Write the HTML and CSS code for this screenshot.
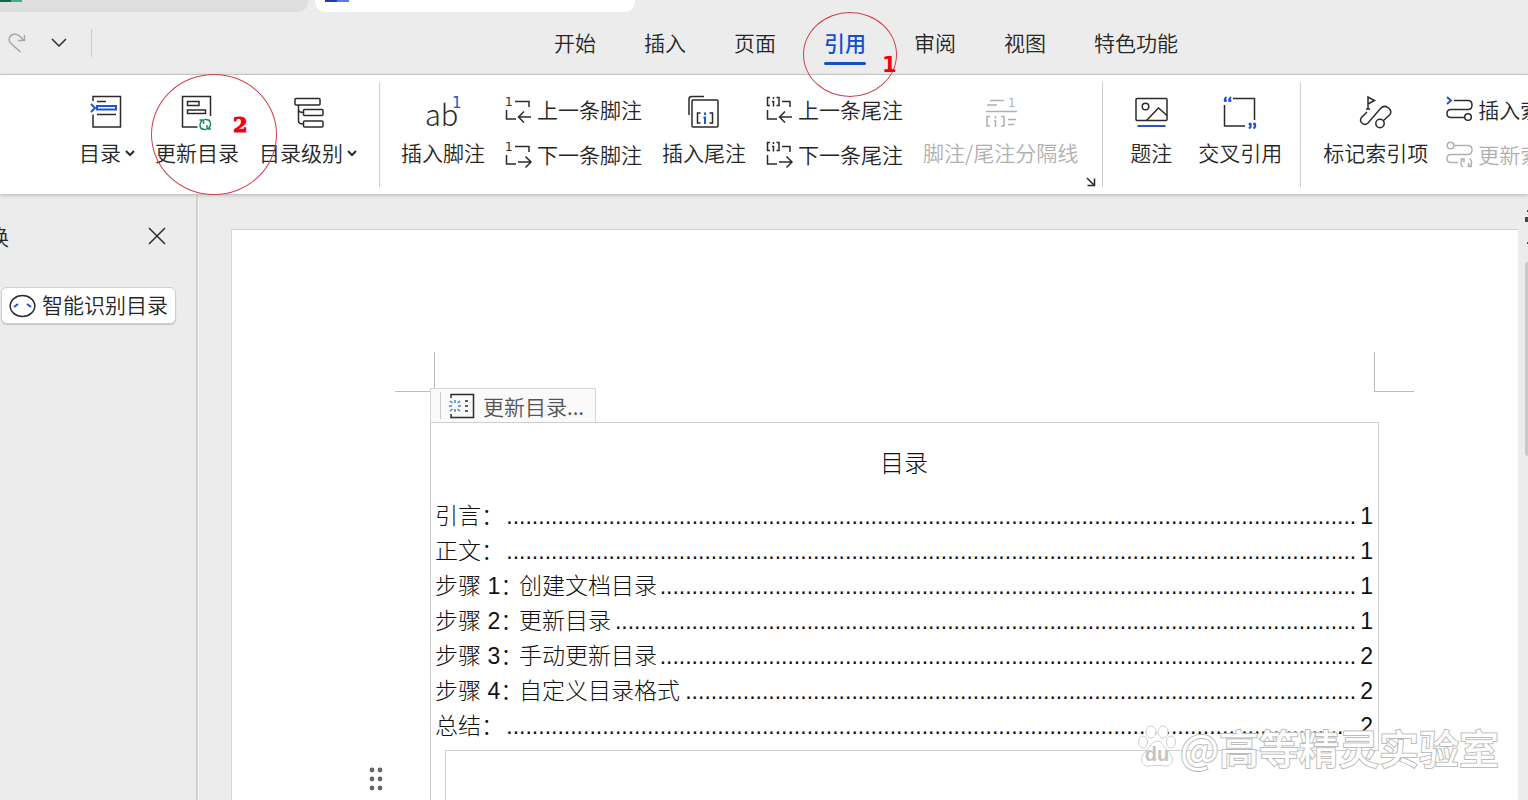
FILE: index.html
```
<!DOCTYPE html>
<html lang="zh-CN">
<head>
<meta charset="utf-8">
<title>目录</title>
<link rel="stylesheet" href="styles.css">
</head>
<body>
<div class="app">
  <div class="doc-tabs">
    <div class="doc-tab doc-tab-sheet"><span class="file-mark green"></span></div>
    <div class="doc-tab doc-tab-active"><span class="file-mark blue"></span></div>
  </div>

  <header class="menubar">
    <div class="quick">
      <button class="icon-btn" aria-label="恢复"><svg width="18" height="20" viewBox="0 0 18 20" class="line muted"><path d="M12.500 19L3 10.500C-1 6.500 2 .5 7.500 1.200C11.500 1.500 13 4 15.500 7M16.500 2v5.500H10"/></svg></button>
      <button class="icon-btn" aria-label="更多"><svg width="16" height="10" viewBox="0 0 16 10" class="line"><path d="M1 1l7 7 7-7"/></svg></button>
    </div>
    <nav class="tabs">
      <button class="tab">开始</button>
      <button class="tab">插入</button>
      <button class="tab">页面</button>
      <button class="tab active">引用<span class="ring ring-one"></span><span class="mark mark-one">1</span></button>
      <button class="tab">审阅</button>
      <button class="tab">视图</button>
      <button class="tab">特色功能</button>
    </nav>
  </header>

  <section class="ribbon">
    <div class="group group-toc">
      <button class="tool">
        <svg width="34" height="36" viewBox="0 0 34 36" class="line"><path d="M3 6V1.500h27.500V32H3V19.500M7 6.500h9M7 19.500h19"/><path class="b" d="M1 9l4 4-4 4M7 11h19v3.500H7z"/></svg>
        <span class="label">目录<svg width="10" height="7" viewBox="0 0 10 7" class="line caret"><path d="M1 1l4 4 4-4"/></svg></span>
      </button>
      <button class="tool">
        <svg width="34" height="36" viewBox="0 0 34 36" class="line"><path d="M17.500 32H2.500V1.500h28V21M7.500 6.500H19v4H7.500zM7.500 15h18v3.500h-18z"/><path class="g" d="M22 34.500C19 32 19.500 28 22 25.500M19.500 25h4v4M24.500 24.500c4-.5 6.500 2 6 5M28.500 24.500c3 2.500 2.500 6.500 0 9M31 34h-4v-4M26 34.500c-2 .3-3.500-.3-4.500-1.500"/></svg>
        <span class="label">更新目录</span><span class="ring ring-two"></span><span class="mark mark-two">2</span>
      </button>
      <button class="tool">
        <svg width="34" height="36" viewBox="0 0 34 36" class="line"><rect x="4" y="3.500" width="25" height="6.500" rx="1"/><rect x="12.500" y="14.500" width="19.500" height="6" rx="1"/><rect x="12.500" y="26" width="19.500" height="6" rx="1"/><path d="M7.500 10v16q0 3 5 3M7.500 14.500q0 3 5 3"/></svg>
        <span class="label">目录级别<svg width="10" height="7" viewBox="0 0 10 7" class="line caret"><path d="M1 1l4 4 4-4"/></svg></span>
      </button>
    </div>

    <div class="group group-notes">
      <button class="tool">
        <svg width="34" height="36" viewBox="0 0 34 36"><text class="ab" x="-1" y="31">ab</text><text class="sup" x="26" y="13">1</text></svg>
        <span class="label">插入脚注</span>
      </button>
      <div class="stack">
        <button class="row-tool"><svg width="27" height="28" viewBox="0 0 27 28" class="line"><path d="M10 6.500h14V12M1.500 15v9H11M26 22H14M19 16.500L13.500 22l5.500 5.500"/><text class="tiny" x="0" y="11">1</text></svg>上一条脚注</button>
        <button class="row-tool"><svg width="27" height="28" viewBox="0 0 27 28" class="line"><path d="M10 6.500h14V12M1.500 15v9H11M13 22h12M20.500 16.500L26 22l-5.500 5.500"/><text class="tiny" x="0" y="11">1</text></svg>下一条脚注</button>
      </div>
      <button class="tool">
        <svg width="34" height="36" viewBox="0 0 34 36" class="line"><path d="M2 20V4q0-2.500 2.500-2.500H17"/><rect x="5" y="5" width="26" height="27" rx="1"/><path d="M13.500 18h-3v10h3M22.500 18h3v10h-3"/><path class="b" d="M18 17.500v2.500M16.500 22.500H18V29"/></svg>
        <span class="label">插入尾注</span>
      </button>
      <div class="stack">
        <button class="row-tool"><svg width="27" height="28" viewBox="0 0 27 28" class="line"><path d="M16 6.500h8V12M1.500 15v9H11M26 22H14M19 16.500L13.500 22l5.500 5.500M4 2.500H1.500v8H4M10.500 2.500H13v8h-2.500M7.500 2v2M6 6.500h1.500v5"/></svg>上一条尾注</button>
        <button class="row-tool"><svg width="27" height="28" viewBox="0 0 27 28" class="line"><path d="M16 6.500h8V12M1.500 15v9H11M13 22h12M20.500 16.500L26 22l-5.500 5.500M4 2.500H1.500v8H4M10.500 2.500H13v8h-2.500M7.500 2v2M6 6.500h1.500v5"/></svg>下一条尾注</button>
      </div>
      <button class="tool disabled" disabled>
        <svg width="34" height="36" viewBox="0 0 34 36" class="line"><path d="M6 5.500h14M3 10h10M2 16.500h31M6 21.500H3v9.500h3M17 21.500h3V31h-3M11.500 21v2.500M10 26h1.500v6M24 24.500h8M24 29.500h6"/><text class="tiny" x="24" y="12">1</text></svg>
        <span class="label">脚注/尾注分隔线</span>
      </button>
      <button class="launcher" aria-label="脚注和尾注设置"><svg width="10" height="10" viewBox="0 0 10 10" class="line"><path d="M1 1l7 7M8.500 1.500v7h-7"/></svg></button>
    </div>

    <div class="group group-caption">
      <button class="tool">
        <svg width="34" height="36" viewBox="0 0 34 36" class="line"><rect x="2" y="3.500" width="31" height="22" rx="1"/><circle cx="11.500" cy="11.500" r="3.300"/><path d="M12.500 25.500L24.500 13l8.500 7.500"/><path class="b" d="M3.500 31h28"/></svg>
        <span class="label">题注</span>
      </button>
      <button class="tool">
        <svg width="34" height="36" viewBox="0 0 34 36" class="line"><path d="M10 3.500h21.500V25M1.500 10v21H22"/><path class="b" d="M3.500 2Q1 4 2 6.500M8 2Q5.500 4 6.500 6.500M26 33.500q2.500-2 1.500-4.500M30.500 33.500q2.500-2 1.500-4.500"/><g class="bf"><circle cx="2.500" cy="5.500" r="1.500"/><circle cx="7" cy="5.500" r="1.500"/><circle cx="27" cy="29" r="1.500"/><circle cx="31.500" cy="29" r="1.500"/></g></svg>
        <span class="label">交叉引用</span>
      </button>
    </div>

    <div class="group group-index">
      <button class="tool">
        <svg width="34" height="36" viewBox="0 0 34 36" class="line"><path d="M9 14V2l6.500 3.500L9 9M7 14h4M8 17l-5.500 5.500C-.5 27 5 31.500 9 28L21.500 13.500C26 8.500 34 14 31 19.500L24 26"/><circle cx="21" cy="28.500" r="4.200"/></svg>
        <span class="label">标记索引项</span>
      </button>
      <div class="stack">
        <button class="row-tool"><svg width="27" height="28" viewBox="0 0 27 28" class="line"><path d="M8 5.500h14q4 0 4 4.500t-4 4.500H5q-4 0-4 4t4 4h13"/><circle cx="22" cy="22" r="3.300"/><path class="b" d="M1 2l4 3.500L1 9"/></svg>插入索引</button>
        <button class="row-tool disabled" disabled><svg width="27" height="28" viewBox="0 0 27 28" class="line"><path d="M8 5.500h14q4 0 4 4.500t-4 4.500H5q-4 0-4 4t4 4h7"/><circle cx="4.500" cy="5.500" r="3.300"/><path d="M17 27c-3-2-2.500-5.500-.5-7.500M14.500 19h3.500v3.500M23.500 18.500c3 2 2.500 5.500.5 7.500M26 26.500h-3.500V23"/></svg>更新索引</button>
      </div>
    </div>
  </section>

  <main class="workspace">
    <aside class="side">
      <div class="side-head"><span class="side-title">换</span>
        <button class="icon-btn" aria-label="关闭"><svg width="18" height="18" viewBox="0 0 18 18" class="line"><path d="M1 1l16 16M17 1L1 17"/></svg></button>
      </div>
      <button class="smart"><svg width="27" height="24" viewBox="0 0 27 24" class="line"><ellipse cx="13.500" cy="12" rx="12.300" ry="10.500"/><path class="b" d="M5 13l4-3M18 10l4 3"/></svg><span class="smart-text">智能识别目录</span></button>
    </aside>

    <div class="canvas">
      <article class="paper">
        <div class="crops"><span class="crop crop-left"></span><span class="crop crop-right"></span></div>
        <button class="toc-update"><svg width="27" height="26" viewBox="0 0 27 26" class="line"><path d="M3 5V1.500h22.500v23H3V21M17 8h3M17 13h3M17 18h3"/><path class="lb" d="M7 7v3M7 16v3M1 13h3M10 13h3M2 8l2.500 2M12 8l-2.500 2M2 18l2.500-2M12 18l-2.500-2"/></svg>更新目录...</button>
        <div class="toc">
          <div class="toc-body">
            <h1 class="toc-title">目录</h1>
            <ol class="toc-list">
              <li class="entry"><span class="name">引言：</span><span class="dots"></span><span class="num">1</span></li>
              <li class="entry"><span class="name">正文：</span><span class="dots"></span><span class="num">1</span></li>
              <li class="entry"><span class="name"><span class="step">步骤 1：</span>创建文档目录</span><span class="dots"></span><span class="num">1</span></li>
              <li class="entry"><span class="name"><span class="step">步骤 2：</span>更新目录</span><span class="dots"></span><span class="num">1</span></li>
              <li class="entry"><span class="name"><span class="step">步骤 3：</span>手动更新目录</span><span class="dots"></span><span class="num">2</span></li>
              <li class="entry"><span class="name"><span class="step">步骤 4：</span>自定义目录格式</span><span class="dots"></span><span class="num">2</span></li>
              <li class="entry"><span class="name">总结：</span><span class="dots"></span><span class="num">2</span></li>
            </ol>
          </div>
          <div class="next-block">
            <button class="grip" aria-label="拖动"><svg width="16" height="24" viewBox="0 0 16 24"><circle cx="4" cy="3" r="2.400"/><circle cx="12" cy="3" r="2.400"/><circle cx="4" cy="12" r="2.400"/><circle cx="12" cy="12" r="2.400"/><circle cx="4" cy="21" r="2.400"/><circle cx="12" cy="21" r="2.400"/></svg></button>
          </div>
        </div>
      </article>
      <div class="scroll">
        <svg width="3" height="40" viewBox="0 0 3 40"><path d="M2 2h1v2H2zM0 9h3v5H0zM2 34h1v2H2z"/></svg>
        <div class="thumb"></div>
      </div>
    </div>
  </main>

  <div class="watermark">
    <svg width="38" height="42" viewBox="0 0 38 42"><ellipse cx="13" cy="6" rx="5" ry="6"/><ellipse cx="25" cy="6" rx="5" ry="6"/><ellipse cx="5" cy="16" rx="4.500" ry="6"/><ellipse cx="33" cy="16" rx="4.500" ry="6"/><path d="M19 15c5 0 7 6 11 10 8 7 4 16-3 15-5-1-11-1-16 0-7 1-11-8-3-15 4-4 6-10 11-10z"/><text x="19" y="35">du</text></svg>
    <span class="wm-text">@高等精灵实验室</span>
  </div>
</div>
<script src="leaders.js"></script>
</body>
</html>
```
FILE: leaders.js
```
// Fills each table-of-contents leader with as many whole dots as fit.
function fillLeaders() {
  const leaders = document.querySelectorAll(".dots");
  leaders.forEach((el) => { el.textContent = ""; });
  leaders.forEach((el) => {
    const ctx = document.createElement("canvas").getContext("2d");
    ctx.font = getComputedStyle(el).font;
    const dot = ctx.measureText("..........").width / 10;
    el.textContent = ".".repeat(Math.max(0, Math.floor(el.clientWidth / dot)));
  });
}
fillLeaders();
window.addEventListener("resize", fillLeaders);
```
FILE: styles.css
```
* { box-sizing: border-box; }

body {
  margin: 0;
  background: #ececec;
  color: #262626;
  font: 21px/24px "Noto Sans CJK SC", sans-serif;
  font-weight: 350;
}

button {
  padding: 0;
  border: 0;
  background: none;
  color: inherit;
  font: inherit;
  white-space: nowrap;
}

svg { display: block; flex: none; overflow: visible; }
.line { fill: none; stroke: #2b2b2b; stroke-width: 1.5; }
.line.muted { stroke: #a8a8a8; }
.line .b { stroke: #1f56c8; stroke-width: 2; }
.line .g { stroke: #1b8a5a; stroke-width: 1.5; }
.line .lb { stroke: #3f7fd0; }
.line .bf { fill: #1f56c8; stroke: none; }
.line text { fill: #2b2b2b; stroke: none; }
.tiny { font: 12px "DejaVu Sans", sans-serif; }
.ab { font: 300 29px "Noto Sans CJK SC", sans-serif; fill: #2b2b2b; }
.sup { font: 15px "DejaVu Sans", sans-serif; fill: #1f56c8; }

.app {
  position: relative;
  display: flex;
  flex-direction: column;
  height: 100vh;
  overflow: hidden;
}

/* Document tabs */
.doc-tabs { display: flex; gap: 7px; height: 12px; flex: none; }
.doc-tab { background: #dedede; }
.doc-tab-sheet { width: 308px; border-radius: 0 0 10px 0; }
.doc-tab-active { width: 320px; padding-left: 10px; background: #fff; border-radius: 0 0 10px 10px; }
.file-mark { display: block; height: 2px; }
.green { width: 22px; background: linear-gradient(90deg, #126b48 50%, #3fae86 50%); }
.blue { width: 24px; background: linear-gradient(90deg, #2438b8 50%, #5b78e6 50%); }

/* Menu bar */
.menubar {
  display: flex;
  align-items: center;
  flex: none;
  height: 63px;
  border-bottom: 1px solid #cbcbcb;
}
.quick {
  display: flex;
  align-items: center;
  gap: 25px;
  width: 92px;
  height: 28px;
  padding-left: 8px;
  border-right: 1px solid #cbcbcb;
}
.tabs { display: flex; gap: 48px; margin-left: 462px; }
.tab { position: relative; padding: 9px 0 11px; }
.tab.active { color: #1450c8; font-weight: 500; }
.tab.active::after {
  content: "";
  position: absolute;
  left: 0;
  right: 0;
  bottom: 0;
  height: 3px;
  border-radius: 2px;
  background: #1450c8;
}
.ring { position: absolute; z-index: 2; border: 1px solid #d0404f; border-radius: 50%; pointer-events: none; }
.ring-one { left: -21px; top: -9px; width: 94px; height: 85px; }
.mark { position: absolute; z-index: 2; color: #f00012; font-weight: 700; }
.mark-one { left: 58px; top: 32px; font-family: "DejaVu Sans", sans-serif; }
.ring-two { left: -4px; top: -21px; width: 126px; height: 121px; }
.mark-two { left: 78px; top: 18px; font-family: "DejaVu Serif", serif; -webkit-text-stroke: 1px #f00012; }

/* Ribbon */
.ribbon {
  position: relative;
  z-index: 1;
  display: flex;
  flex: none;
  height: 119px;
  padding: 7px 0;
  background: #fff;
  box-shadow: 0 1px 4px #b0b0b0;
}
.group {
  position: relative;
  display: flex;
  flex: none;
  align-items: flex-start;
  gap: 20px;
  padding: 13px 21px 0;
  border-right: 1px solid #cfcfcf;
}
.group-toc { padding-left: 79px; padding-right: 22px; }
.group-notes { padding-right: 24px; }
.group-caption { padding-left: 27px; padding-right: 18px; gap: 26px; }
.group-index { padding-left: 22px; gap: 18px; border-right: 0; }
.tool { position: relative; display: flex; flex-direction: column; align-items: center; gap: 9px; }
.label { display: flex; align-items: center; gap: 4px; }
.caret { stroke-width: 2; margin-top: 3px; }
.stack { display: flex; flex-direction: column; gap: 17px; }
.row-tool { display: flex; align-items: center; gap: 5px; height: 28px; }
.disabled { color: #b0b0b0; }
.disabled .line, .disabled.row-tool .line { stroke: #b0b0b0; }
.disabled text { fill: #b0b0b0; }
.launcher { position: absolute; right: 6px; bottom: 0; }

/* Workspace */
.workspace { display: flex; flex: 1; min-height: 0; }
.side { flex: none; width: 198px; border-right: 2px solid #d2d2d2; overflow: hidden; }
.side-head {
  display: flex;
  align-items: center;
  justify-content: space-between;
  height: 84px;
  padding-right: 30px;
}
.side-title { margin-left: -12px; }
.smart {
  display: flex;
  align-items: center;
  gap: 6px;
  height: 37px;
  margin: 9px 0 0 1px;
  padding: 0 7px;
  border: 1px solid #cfcfcf;
  border-radius: 6px;
  background: #fff;
  box-shadow: 0 1px 1px #c4c4c4;
}
.smart-text { padding-bottom: 3px; }
.canvas { display: flex; flex: 1; min-width: 0; padding: 35px 0 0 32px; border-left: 1px solid #f6f6f6; }
.paper {
  display: flex;
  flex-direction: column;
  flex: 1;
  min-width: 0;
  padding: 122px 139px 0 198px;
  background: #fff;
  border-top: 1px solid #cfcfcf;
  border-left: 1px solid #d6d6d6;
}
.crops { display: flex; flex: none; justify-content: space-between; margin: 0 -35px; }
.crop { width: 40px; height: 40px; border-bottom: 1px solid #bcbcbc; }
.crop-left { border-right: 1px solid #bcbcbc; }
.crop-right { border-left: 1px solid #bcbcbc; }

.toc-update {
  position: relative;
  display: flex;
  align-items: center;
  align-self: flex-start;
  flex: none;
  gap: 8px;
  height: 34px;
  margin-top: -4px;
  padding: 0 11px 0 17px;
  border: 1px solid #d6d6d6;
  border-bottom: 0;
  background: #fafafa;
  color: #555;
}
.toc-update::before {
  content: "";
  position: absolute;
  left: 9px;
  top: 3px;
  bottom: 3px;
  border-left: 1px solid #cbcbcb;
}
.toc { display: flex; flex: 1; flex-direction: column; border-left: 1px solid #cfcfcf; color: #111; }
.toc-body { border: 1px solid #cfcfcf; border-width: 1px 1px 0 0; padding: 23px 5px 6px 4px; }
.toc-title { margin: 0 0 21px; font-size: 24px; line-height: 32px; font-weight: 300; text-align: center; }
.toc-list { margin: 0; padding: 0; list-style: none; font-family: "Liberation Sans", "Noto Sans CJK SC", sans-serif; font-size: 23px; font-weight: 300; line-height: 35px; }
.entry { display: flex; height: 35px; }
.name { flex: none; min-width: 69px; }
.step { display: inline-block; width: 84px; white-space: nowrap; }
.dots { flex: 1; min-width: 0; margin: 0 4px 0 2px; text-align: right; white-space: nowrap; }
.num { flex: none; }
.next-block {
  position: relative;
  flex: 1;
  margin-left: 14px;
  border: 1px solid #cfcfcf;
  border-width: 1px 0 0 1px;
}
.grip { position: absolute; left: -78px; top: 16px; fill: #666; }

.scroll { display: flex; flex-direction: column; align-items: flex-end; gap: 14px; width: 10px; margin-top: -21px; }
.scroll svg { fill: #444; }
.thumb { width: 3px; height: 194px; border-radius: 3px 0 0 3px; background: #c8c8c8; }

/* Watermark */
.watermark {
  position: absolute;
  right: 29px;
  bottom: 25px;
  z-index: 3;
  display: flex;
  align-items: center;
  gap: 4px;
  pointer-events: none;
}
.watermark svg { fill: #fff; stroke: #cfcfcf; }
.watermark svg text { font: 700 20px "Liberation Sans", sans-serif; text-anchor: middle; fill: #c4c4c4; stroke: none; }
.wm-text {
  font-size: 40px;
  line-height: 56px;
  font-weight: 500;
  color: #fff;
  -webkit-text-stroke: 2px #bcbcbc;
  paint-order: stroke fill;
}
```
